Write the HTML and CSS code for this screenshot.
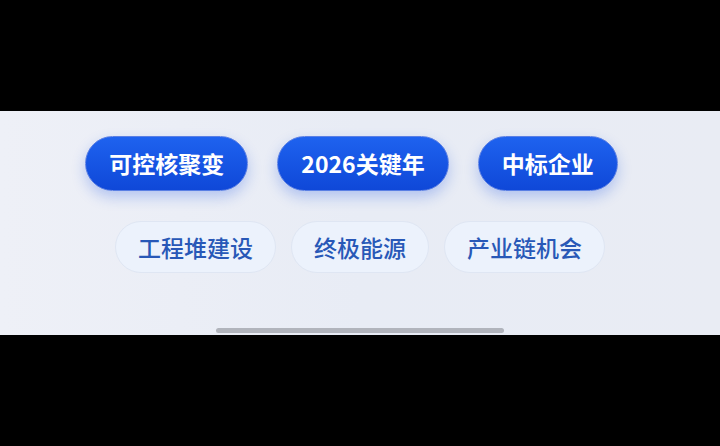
FILE: index.html
```html
<!DOCTYPE html>
<html lang="zh-CN">
<head>
  <meta charset="UTF-8" />
  <meta name="viewport" content="width=device-width, initial-scale=1.0"/>
  <title>热门话题</title>
  <link rel="stylesheet" href="styles.css">
</head>
<body>

<div class="letterbox"></div>

<main class="screen">
  <!-- Hot tags -->
  <div class="tag-row row-primary">
    <span class="tag tag-hot">可控核聚变</span>
    <span class="tag tag-hot">2026关键年</span>
    <span class="tag tag-hot">中标企业</span>
  </div>

  <!-- Related tags -->
  <div class="tag-row row-secondary">
    <span class="tag tag-soft">工程堆建设</span>
    <span class="tag tag-soft">终极能源</span>
    <span class="tag tag-soft">产业链机会</span>
  </div>

  <div class="home-indicator"></div>
</main>

<div class="letterbox letterbox-bottom"></div>

</body>
</html>
```

FILE: styles.css
```css
:root {
  --primary: #1553e4;
  --soft-text: #2858b7;
}

* {
  box-sizing: border-box;
  font-family: "Noto Sans CJK SC", "Noto Sans", sans-serif;
}

body {
  margin: 0;
  height: 446px;
  background: #000;
  display: flex;
  flex-direction: column;
  overflow: hidden;
}

.letterbox {
  height: 111px;
  background: #000;
}

.letterbox-bottom {
  flex: 1;
}

.screen {
  height: 224px;
  background: linear-gradient(90deg, #eef0f7 0%, #e8ecf5 50%, #e9ecf4 100%);
  padding-top: 25px;
  display: flex;
  flex-direction: column;
  align-items: center;
}

.tag-row {
  display: flex;
  justify-content: center;
}

.row-primary {
  gap: 29px;
  padding-right: 17px;
}

.row-secondary {
  gap: 15px;
  margin-top: 30px;
}

.tag {
  display: inline-flex;
  align-items: center;
  justify-content: center;
  border-radius: 999px;
  font-size: 23px;
  line-height: 1;
  white-space: nowrap;
}

.tag-hot {
  height: 55px;
  padding: 0 23px 1px;
  color: #fff;
  font-weight: 700;
  background: linear-gradient(180deg, #1e62ef 0%, #0f48d8 100%);
  border: 1.5px solid #5a7fe4;
  box-shadow: 0 6px 14px rgba(32, 86, 225, 0.28);
}

.tag-soft {
  height: 52px;
  padding: 0 22px;
  color: var(--soft-text);
  font-weight: 500;
  background: #ecf2fc;
  border: 1px solid #dfe6f3;
}

.home-indicator {
  width: 288px;
  height: 5px;
  margin-top: auto;
  margin-bottom: 2px;
  border-radius: 3px;
  background: #b1b4bc;
}
```
